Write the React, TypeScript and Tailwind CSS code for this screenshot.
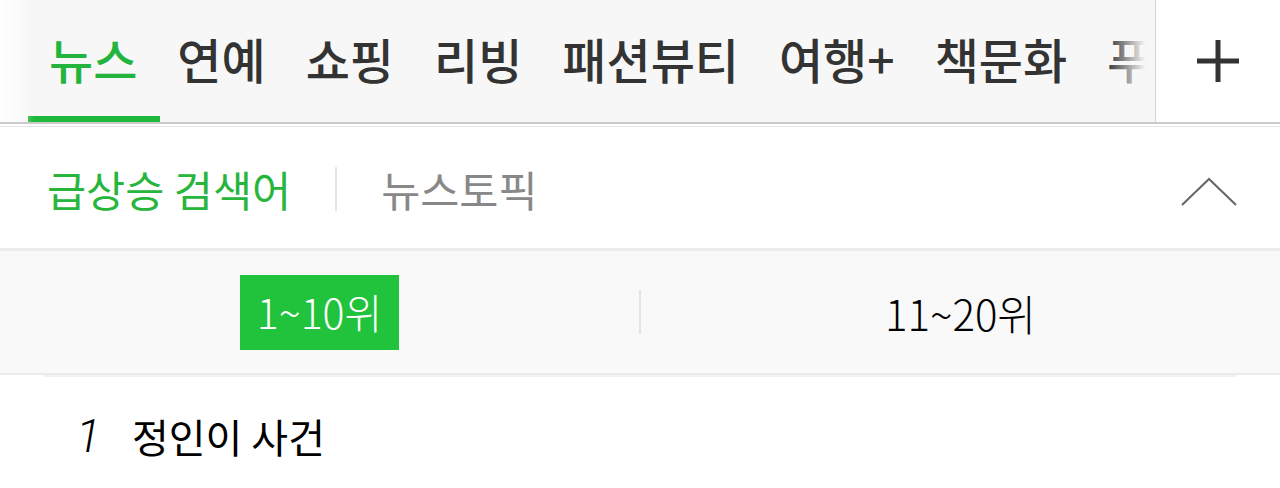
const FONT = "font-['Noto_Sans_CJK_KR','Noto_Sans',sans-serif]";

const tabs = ["뉴스", "연예", "쇼핑", "리빙", "패션뷰티", "여행+", "책문화", "푸드"];

function PlusIcon() {
  return (
    <svg width="44" height="44" viewBox="0 0 44 44" fill="none">
      <path d="M22 1v42M1 22h42" stroke="#333" strokeWidth="5" />
    </svg>
  );
}

function ChevronUp() {
  return (
    <svg width="56" height="30" viewBox="0 0 56 30" fill="none">
      <path d="M1 28L28 2l27 26" stroke="#666" strokeWidth="2" />
    </svg>
  );
}

export default function App() {
  return (
    <div className={`w-[1280px] h-[488px] overflow-hidden bg-white ${FONT}`}>
      {/* Category tabs */}
      <div className="flex h-[124px] bg-[#f7f7f7] border-b-2 border-[#cbcbcb]">
        <div className="relative flex-1 overflow-hidden">
          <div className="flex h-full pl-[29px] whitespace-nowrap">
            {tabs.map((t, i) => (
              <div
                key={t}
                className={`relative flex items-center px-[20px] pb-[6px] text-[48px] font-medium ${
                  i === 0 ? "text-[#22b43c]" : "text-[#333]"
                }`}
              >
                {t}
                {i === 0 && (
                  <span className="absolute -left-px -right-[3px] bottom-0 h-[6px] bg-[#1fb83a]" />
                )}
              </div>
            ))}
          </div>
          <div className="absolute left-0 top-0 h-full w-[34px] bg-gradient-to-r from-white to-[#f7f7f7]/0" />
          <div className="absolute right-0 top-0 h-full w-[48px] bg-gradient-to-l from-[#f7f7f7] from-20% to-[#f7f7f7]/0" />
        </div>
        <div className="w-[125px] flex items-center justify-center bg-white border-l border-[#d4d4d4]">
          <PlusIcon />
        </div>
      </div>
      <div className="h-[3px] border-b border-[#e6e6e6]" />

      {/* Realtime / news topic header */}
      <div className="flex items-center h-[124px] pl-[47px] pr-[43px] pt-[2px] border-b-[3px] border-[#ececec]">
        <span className="text-[42.5px] text-[#27b53c]">급상승 검색어</span>
        <span className="mx-[44px] w-[2px] h-[44px] bg-[#e6e6e6]" />
        <span className="text-[42.5px] text-[#888]">뉴스토픽</span>
        <div className="ml-auto pt-[6px]">
          <ChevronUp />
        </div>
      </div>

      {/* Rank range switch */}
      <div className="flex items-center h-[124px] bg-[#f9f9f9] border-b-2 border-[#ebebeb]">
        <div className="flex-1 flex justify-center">
          <span className="flex items-center justify-center w-[159px] h-[75px] bg-[#20c33b] text-white text-[41px] font-light">
            1~10위
          </span>
        </div>
        <span className="w-[2px] h-[44px] bg-[#e3e3e3]" />
        <div className="flex-1 flex justify-center">
          <span className="text-[42px] font-light text-black">11~20위</span>
        </div>
      </div>

      {/* List */}
      <div className="mx-[44px] border-t-2 border-[#f2f2f2]">
        <div className="flex items-center h-[110px] pl-[32px] pt-[8px]">
          <span className="w-[56px] text-[46px] italic font-light font-['Roboto',sans-serif] text-black">1</span>
          <span className="text-[40px] text-black">정인이 사건</span>
        </div>
      </div>
    </div>
  );
}
